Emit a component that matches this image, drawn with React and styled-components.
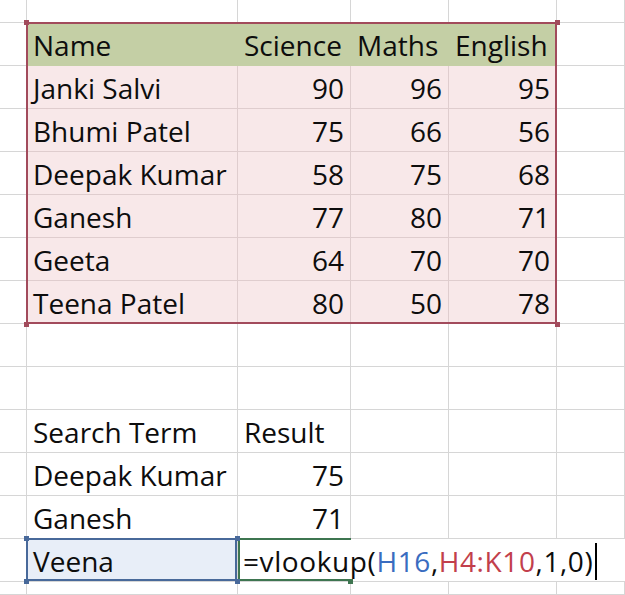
import React from 'react';
import styled, { createGlobalStyle } from 'styled-components';

const Global = createGlobalStyle`
  html, body { margin: 0; padding: 0; background: #ffffff; }
  body { font-family: 'Open Sans', 'Liberation Sans', sans-serif; }
`;

const GRID = '#d6d6d6';
const MAROON = '#a24b5c';
const OLIVE = '#c4cfa5';
const PINK = '#f8e8e9';
const PINK_LINE = '#dfcdce';
const BLUE = '#48699a';
const GREEN = '#3e7550';

const Sheet = styled.div`
  display: grid;
  grid-template-columns: 27px 211px 113px 98px 108px 1fr;
  grid-template-rows: 23px repeat(13, 43px) 1fr;
  width: 625px;
  height: 595px;
  overflow: hidden;
  background: #ffffff;
  font-family: 'Open Sans', 'Liberation Sans', sans-serif;
  font-size: 28px;
  line-height: 28px;
  color: #0d0d0d;
`;

const Cell = styled.div`
  box-sizing: border-box;
  border-right: 1px solid ${GRID};
  border-bottom: 1px solid ${GRID};
  display: flex;
  align-items: flex-end;
  justify-content: ${p => (p.$num ? 'flex-end' : 'flex-start')};
  padding: 0 6px 6px 6px;
  white-space: nowrap;
  min-width: 0;
`;

const Table = styled.div`
  grid-column: 2 / 6;
  grid-row: 2 / 9;
  position: relative;
  display: grid;
  grid-template-columns: 211px 113px 98px 108px;
  grid-template-rows: repeat(7, 43px);
  &::after {
    content: '';
    position: absolute;
    inset: -1px 0 0 -1px;
    border: 2px solid ${MAROON};
    pointer-events: none;
  }
`;

const TableCell = styled(Cell)`
  background: ${p => (p.$head ? OLIVE : PINK)};
  border-color: ${p => (p.$head ? OLIVE : PINK_LINE)};
`;

const Handle = styled.span`
  position: absolute;
  z-index: 2;
  width: 5px;
  height: 5px;
  background: ${p => p.$c};
  ${p => (p.$bottom ? 'bottom: -3px;' : 'top: -3px;')}
  ${p => (p.$right ? 'right: -3px;' : 'left: -3px;')}
`;

const ActiveCell = styled(Cell)`
  grid-column: 2;
  grid-row: 14;
  position: relative;
  background: #e8eef8;
  &::after {
    content: '';
    position: absolute;
    inset: -1px 0 0 -1px;
    border: 2px solid ${BLUE};
    pointer-events: none;
  }
`;

const EditCell = styled(Cell)`
  grid-column: 3 / -1;
  grid-row: 14;
  position: relative;
  border-right: none;
  padding-left: 5px;
  letter-spacing: 0.6px;
  &::before {
    content: '';
    position: absolute;
    left: 0;
    top: -1px;
    bottom: 0;
    width: 113px;
    box-sizing: border-box;
    border: 2px solid ${GREEN};
    border-right: none;
    pointer-events: none;
  }
`;

const EditHandle = styled.span`
  position: absolute;
  left: 110px;
  bottom: -3px;
  width: 5px;
  height: 5px;
  background: ${GREEN};
`;

const Ref = styled.span`
  color: ${p => p.$c};
`;

const Caret = styled.span`
  display: inline-block;
  align-self: flex-end;
  width: 2px;
  height: 37px;
  margin-left: 2px;
  margin-bottom: -5px;
  background: #000;
`;

const header = ['Name', 'Science', 'Maths', 'English'];
const rows = [
  ['Janki Salvi', 90, 96, 95],
  ['Bhumi Patel', 75, 66, 56],
  ['Deepak Kumar', 58, 75, 68],
  ['Ganesh', 77, 80, 71],
  ['Geeta', 64, 70, 70],
  ['Teena Patel', 80, 50, 78],
];

const Empty = ({ n }) =>
  Array.from({ length: n }, (_, i) => <Cell key={i} />);

export default function App() {
  return (
    <>
      <Global />
      <Sheet>
        <Table>
          <Handle $c={MAROON} />
          <Handle $c={MAROON} $right />
          <Handle $c={MAROON} $bottom />
          <Handle $c={MAROON} $bottom $right />
          {header.map(h => (
            <TableCell key={h} $head>{h}</TableCell>
          ))}
          {rows.map(r =>
            r.map((v, i) => (
              <TableCell key={r[0] + i} $num={i > 0}>{v}</TableCell>
            ))
          )}
        </Table>
        <ActiveCell>
          Veena
          <Handle $c={BLUE} />
          <Handle $c={BLUE} $right />
          <Handle $c={BLUE} $bottom />
          <Handle $c={BLUE} $bottom $right />
        </ActiveCell>
        <EditCell>
          =vlookup(<Ref $c="#3a6cc0">H16</Ref>,<Ref $c="#c23f4c">H4:K10</Ref>,1,0)
          <Caret />
          <EditHandle />
        </EditCell>

        {/* row 1 */}
        <Empty n={6} />
        {/* rows 2-8: column A and F around the table */}
        {rows.concat([header]).map((_, i) => (
          <React.Fragment key={i}>
            <Cell />
            <Cell />
          </React.Fragment>
        ))}
        {/* rows 9-10 */}
        <Empty n={12} />
        {/* row 11 */}
        <Cell />
        <Cell>Search Term</Cell>
        <Cell>Result</Cell>
        <Cell />
        <Cell />
        <Cell />
        {/* row 12 */}
        <Cell />
        <Cell>Deepak Kumar</Cell>
        <Cell $num>75</Cell>
        <Cell />
        <Cell />
        <Cell />
        {/* row 13 */}
        <Cell />
        <Cell>Ganesh</Cell>
        <Cell $num>71</Cell>
        <Cell />
        <Cell />
        <Cell />
        {/* row 14 */}
        <Cell />
        {/* row 15 */}
        <Empty n={6} />
      </Sheet>
    </>
  );
}
